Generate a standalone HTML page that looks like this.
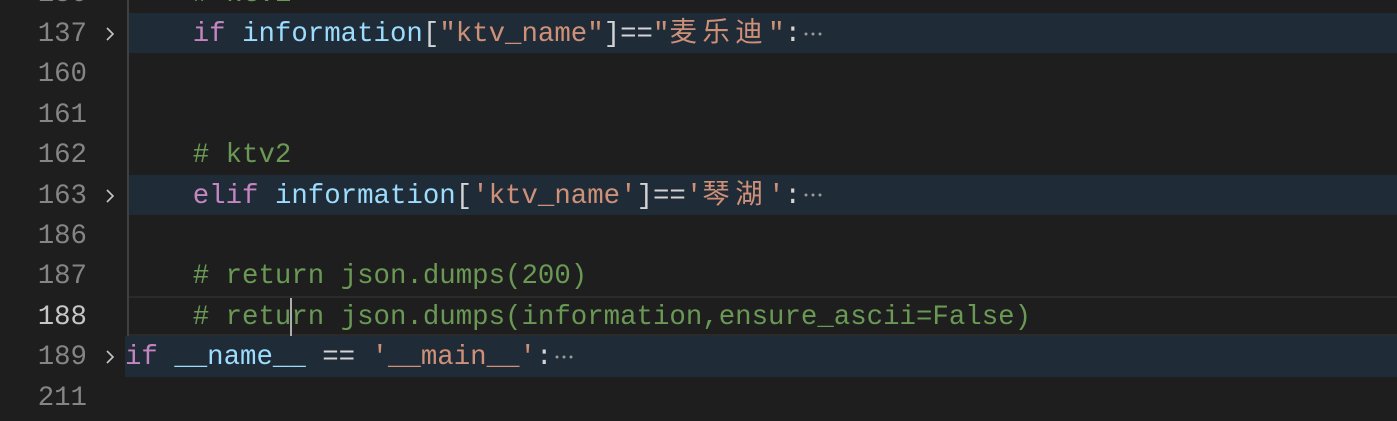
<!DOCTYPE html>
<html><head><meta charset="utf-8"><style>
html,body{margin:0;padding:0;background:#1e1e1e;width:1397px;height:416px;overflow:hidden}
.row{position:absolute;left:0;width:1397px;height:40.4px;font-family:"Liberation Mono","Noto Sans CJK SC",monospace;font-size:27.4px;line-height:44px;white-space:pre}
.num{position:absolute;left:0;width:87px;text-align:right;color:#858585}
.chev{position:absolute;left:104px;top:13px;width:12px;height:16px}
.code{position:absolute;left:127px;top:0;height:40px;color:#d4d4d4}
.hl{position:absolute;left:127px;right:0;top:0;bottom:0;background:#202b38}
.k{color:#c586c0}.v{color:#9cdcfe}.s{color:#ce9178}.c{color:#6a9955}
.cj{letter-spacing:5.5px}
.d{display:inline-block;width:24px;height:10px;vertical-align:middle}
.guide{position:absolute;left:127px;top:0;width:2px;height:337px;background:#404040}
</style></head><body>
<svg width="0" height="0" style="position:absolute"><defs><symbol id="ch" viewBox="0 0 12 16"><path d="M3 2 L9 8 L3 14" fill="none" stroke="#c5c5c5" stroke-width="1.6"/></symbol><symbol id="dt" viewBox="0 0 24 10"><circle cx="5" cy="5" r="1.5" fill="#999"/><circle cx="12" cy="5" r="1.5" fill="#999"/><circle cx="19" cy="5" r="1.5" fill="#999"/></symbol></defs></svg>
<div class="row" style="top:-27px"><span class="num">136</span><span class="code c">    # ktv1</span></div>
<div class="row" style="top:13px"><div class="hl"></div><span class="num">137</span><svg class="chev"><use href="#ch"/></svg><span class="code">    <span class="k">if</span> <span class="v">information</span>[<span class="s">"ktv_name"</span>]==<span class="s">"<span class="cj">麦乐迪</span>"</span>:<svg class="d"><use href="#dt"/></svg></span></div>
<div class="row" style="top:53.4px"><span class="num">160</span></div>
<div class="row" style="top:93.8px"><span class="num">161</span></div>
<div class="row" style="top:134.2px"><span class="num">162</span><span class="code c">    # ktv2</span></div>
<div class="row" style="top:174.6px"><div class="hl"></div><span class="num">163</span><svg class="chev"><use href="#ch"/></svg><span class="code">    <span class="k">elif</span> <span class="v">information</span>[<span class="s">'ktv_name'</span>]==<span class="s">'<span class="cj">琴湖</span>'</span>:<svg class="d"><use href="#dt"/></svg></span></div>
<div class="row" style="top:215px"><span class="num">186</span></div>
<div class="row" style="top:255.4px"><span class="num">187</span><span class="code c">    # return json.dumps(200)</span></div>
<div class="row" style="top:295.8px"><div style="position:absolute;left:127px;right:0;top:0;bottom:0;border-top:2px solid #2a2a2a;border-bottom:2px solid #2a2a2a;box-sizing:border-box"></div><span class="num" style="color:#c6c6c6">188</span><span class="code c">    # return json.dumps(information,ensure_ascii=False)</span><div style="position:absolute;left:290px;top:2px;width:2px;height:38px;background:#aeafad"></div></div>
<div class="guide"></div>
<div class="row" style="top:336.2px"><div class="hl" style="left:125px"></div><span class="num">189</span><svg class="chev"><use href="#ch"/></svg><span class="code" style="left:125px"><span class="k">if</span> <span class="v">__name__</span> == <span class="s">'__main__'</span>:<svg class="d"><use href="#dt"/></svg></span></div>
<div class="row" style="top:376.6px"><span class="num">211</span></div>
</body></html>
